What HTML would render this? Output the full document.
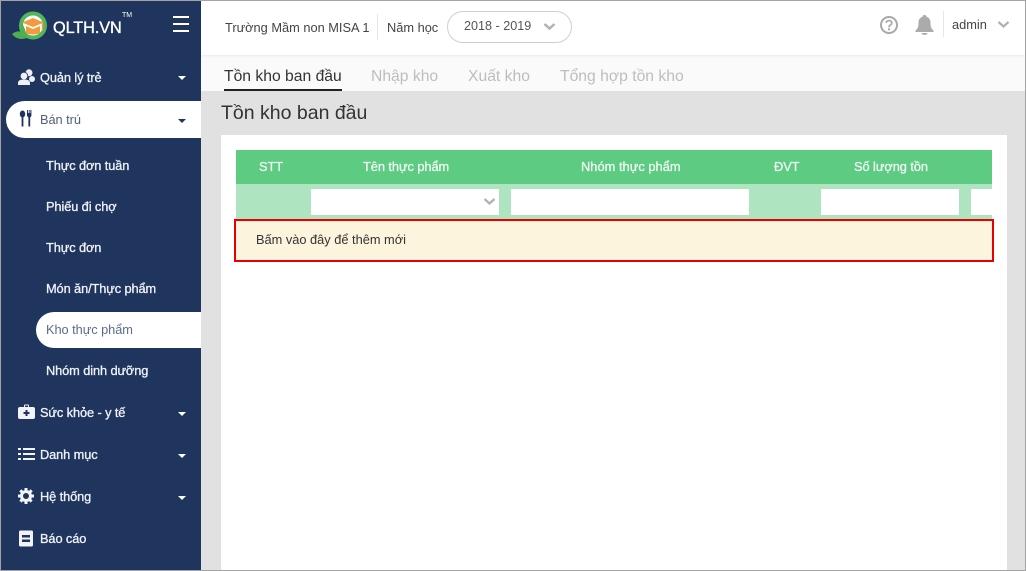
<!DOCTYPE html>
<html><head><meta charset="utf-8">
<style>
html,body{margin:0;padding:0}
body{width:1026px;height:571px;position:relative;overflow:hidden;background:#e1e1e1;font-family:"Liberation Sans","Noto Sans CJK SC",sans-serif}
.a{position:absolute}
.t{position:absolute;white-space:nowrap;line-height:16px}
.m{font-size:12.8px;color:#f0f2f6;letter-spacing:-.1px;-webkit-text-stroke:.3px #f0f2f6}
.s{left:46px}
.i{left:40px}
.c{position:absolute;left:178px;width:0;height:0;border-left:4px solid transparent;border-right:4px solid transparent;border-top:4px solid #fff}
.h{font-size:12.8px;color:#eefaf2;letter-spacing:-.05px;-webkit-text-stroke:.3px #eefaf2;top:159px}
.tab{font-size:15.7px;color:#bdbdbd;top:69px}
</style></head>
<body>
<div class="a" style="left:1px;top:1px;width:200px;height:570px;background:#1f355e"></div>
<div class="a" style="left:201px;top:55px;width:825px;height:36px;background:#fafafa"></div>
<div class="a" style="left:201px;top:1px;width:825px;height:54px;background:#fff;box-shadow:0 1px 3px rgba(0,0,0,.07)"></div>

<svg class="a" style="left:11px;top:11px" width="38" height="30" viewBox="0 0 38 30">
<circle cx="22" cy="14.500" r="12" fill="#fff" stroke="#4fb85c" stroke-width="4"/>
<path d="M1 23 C5 20 8 20 11 21 L9 10 C13 14 15 20 16 27 C10 29 5 28 1 23Z" fill="#4fae50"/>
<path d="M22 7 L33 11.500 L22 16 L11 11.500Z" fill="#f39a3e"/>
<path d="M15 15 L22 18 L29 15 V22 C26 24 18 24 15 22Z" fill="#f39a3e"/>
<path d="M31.500 12 V20" stroke="#f39a3e" stroke-width="1.500"/>
</svg>
<div class="t" style="left:53px;top:19px;font-size:16.300px;color:#fff;line-height:18px;letter-spacing:-.1px;-webkit-text-stroke:.35px #fff">QLTH.VN</div>
<div class="t" style="left:122px;top:12px;font-size:7px;color:#fff;line-height:8px">TM</div>
<div class="a" style="left:173px;top:16px;width:16px;height:2px;background:#fff"></div>
<div class="a" style="left:173px;top:23px;width:16px;height:2px;background:#fff"></div>
<div class="a" style="left:173px;top:30px;width:16px;height:2px;background:#fff"></div>

<svg class="a" style="left:18px;top:69px" width="17" height="16" viewBox="0 0 17 16" fill="#eef0f4">
<circle cx="11" cy="3.800" r="3.500"/><circle cx="14" cy="10" r="3"/>
<circle cx="6" cy="7" r="3.800" stroke="#1f355e" stroke-width=".8"/>
<path d="M0 16 V14 C0 11 3 10.500 6 10.500 C9 10.500 12 11 12 14 V16Z"/></svg>
<div class="t m i" style="top:70px">Quản lý trẻ</div><div class="c" style="top:76px"></div>

<div class="a" style="left:6px;top:101px;width:195px;height:37px;background:#fff;border-radius:19px 0 0 19px"></div>
<svg class="a" style="left:19px;top:110px" width="14" height="17" viewBox="0 0 14 17" fill="#1f355e">
<ellipse cx="3.500" cy="4" rx="2.700" ry="3.500"/><rect x="2.600" y="6" width="1.800" height="10.500"/>
<path d="M8 0 H9 V3 H9.800 V0 H10.600 V3 H11.400 V0 H12.400 V6 L11.200 7.500 V16.500 H9.400 V7.500 L8 6Z"/></svg>
<div class="t" style="left:40px;top:112px;font-size:12.800px;color:#4e5f80;letter-spacing:-.05px">Bán trú</div>
<div class="c" style="top:119px;border-top-color:#1f355e"></div>

<div class="t m s" style="top:158px">Thực đơn tuần</div>
<div class="t m s" style="top:199px">Phiếu đi chợ</div>
<div class="t m s" style="top:240px">Thực đơn</div>
<div class="t m s" style="top:281px">Món ăn/Thực phẩm</div>
<div class="a" style="left:36px;top:312px;width:165px;height:36px;background:#fff;border-radius:18px 0 0 18px"></div>
<div class="t s" style="top:322px;font-size:12.800px;color:#5d6c8a;letter-spacing:-.05px">Kho thực phẩm</div>
<div class="t m s" style="top:363px">Nhóm dinh dưỡng</div>

<svg class="a" style="left:18px;top:404px" width="17" height="16" viewBox="0 0 17 16">
<path d="M6 3 V1.500 Q6 .5 7 .5 H10 Q11 .5 11 1.500 V3 H15 Q17 3 17 5 V13 Q17 15 15 15 H2 Q0 15 0 13 V5 Q0 3 2 3Z M7 3 H10 V1.500 H7Z" fill="#f2f4f7" fill-rule="evenodd"/>
<path d="M8.500 6 V12 M5.500 9 H11.500" stroke="#1f355e" stroke-width="2"/></svg>
<div class="t m i" style="top:405px">Sức khỏe - y tế</div><div class="c" style="top:412px"></div>

<svg class="a" style="left:18px;top:447px" width="17" height="14" viewBox="0 0 17 14" fill="#f2f4f7">
<rect x="0" y="1" width="3" height="2"/><rect x="5" y="1" width="12" height="2"/>
<rect x="0" y="6" width="3" height="2"/><rect x="5" y="6" width="12" height="2"/>
<rect x="0" y="11" width="3" height="2"/><rect x="5" y="11" width="12" height="2"/></svg>
<div class="t m i" style="top:447px">Danh mục</div><div class="c" style="top:454px"></div>

<svg class="a" style="left:18px;top:488px" width="16" height="16" viewBox="0 0 16 16">
<circle cx="8" cy="8" r="4.500" fill="none" stroke="#f2f4f7" stroke-width="3"/>
<path d="M8 0 V16 M0 8 H16 M2.300 2.300 L13.700 13.700 M13.700 2.300 L2.300 13.700" stroke="#f2f4f7" stroke-width="3" stroke-dasharray="3 10 3"/></svg>
<div class="t m i" style="top:489px">Hệ thống</div><div class="c" style="top:496px"></div>

<svg class="a" style="left:19px;top:530px" width="14" height="17" viewBox="0 0 14 17">
<rect width="14" height="16" x="0" y=".5" rx="1.500" fill="#f2f4f7"/>
<path d="M3 5 H11 V7.500 H3Z M3 9.500 H11 V12 H3Z" fill="#1f355e"/></svg>
<div class="t m i" style="top:531px">Báo cáo</div>

<div class="t" style="left:225px;top:20px;font-size:12.800px;color:#444">Trường Mầm non MISA 1</div>
<div class="a" style="left:377px;top:14px;width:1px;height:26px;background:#e6e6e6"></div>
<div class="t" style="left:387px;top:20px;font-size:12.800px;color:#444">Năm học</div>
<div class="a" style="left:447px;top:11px;width:123px;height:30px;border:1px solid #cfcfcf;border-radius:16px;background:#fff"></div>
<div class="t" style="left:464px;top:18px;font-size:12.600px;color:#555">2018 - 2019</div>
<svg class="a" style="left:543px;top:22px" width="13" height="9" viewBox="0 0 13 9"><path d="M1.500 2 L6.500 6.500 L11.500 2" fill="none" stroke="#b0b0b0" stroke-width="2.400"/></svg>

<svg class="a" style="left:879px;top:15px" width="20" height="20" viewBox="0 0 20 20">
<circle cx="10" cy="10" r="8" fill="none" stroke="#a9a9a9" stroke-width="2"/>
<path d="M7.200 8 C7.200 4.800 12.800 4.800 12.800 8 C12.800 10 10 10 10 12.200" fill="none" stroke="#a9a9a9" stroke-width="1.700"/>
<rect x="9" y="13.300" width="2" height="2" fill="#a9a9a9"/></svg>
<svg class="a" style="left:915px;top:15px" width="19" height="20" viewBox="0 0 19 20" fill="#ababab">
<path d="M9.500 0 C11 0 11.500 1 11.500 1.800 C14.500 2.800 15.500 5 15.500 8 C15.500 12 16.500 14 18.500 15.500 V17 H.5 V15.500 C2.500 14 3.500 12 3.500 8 C3.500 5 4.500 2.800 7.500 1.800 C7.500 1 8 0 9.500 0Z"/>
<path d="M6.500 18 H12.500 C12.500 20.500 6.500 20.500 6.500 18Z"/></svg>
<div class="a" style="left:943px;top:11px;width:1px;height:26px;background:#e6e6e6"></div>
<div class="t" style="left:952px;top:17px;font-size:12.800px;color:#444">admin</div>
<svg class="a" style="left:997px;top:20px" width="13" height="9" viewBox="0 0 13 9"><path d="M1.500 2 L6.500 6.500 L11.500 2" fill="none" stroke="#b0b0b0" stroke-width="2.200"/></svg>

<div class="t tab" style="left:224px;color:#333">Tồn kho ban đầu</div>
<div class="a" style="left:224px;top:89px;width:118px;height:2px;background:#222"></div>
<div class="t tab" style="left:371px">Nhập kho</div>
<div class="t tab" style="left:468px">Xuất kho</div>
<div class="t tab" style="left:560px">Tổng hợp tồn kho</div>

<div class="t" style="left:221px;top:101px;font-size:19.500px;line-height:24px;color:#333">Tồn kho ban đầu</div>

<div class="a" style="left:221px;top:135px;width:786px;height:436px;background:#fff"></div>
<div class="a" style="left:236px;top:150px;width:756px;height:34px;background:#5ecb83"></div>
<div class="a" style="left:236px;top:184px;width:756px;height:35px;background:#aee4bf"></div>
<div class="t h" style="left:259px">STT</div>
<div class="t h" style="left:363px">Tên thực phẩm</div>
<div class="t h" style="left:581px;letter-spacing:.05px">Nhóm thực phẩm</div>
<div class="t h" style="left:774px">ĐVT</div>
<div class="t h" style="left:854px">Số lượng tồn</div>
<div class="a" style="left:311px;top:189px;width:188px;height:26px;background:#fff"></div>
<svg class="a" style="left:483px;top:197px" width="13" height="9" viewBox="0 0 13 9"><path d="M1.500 2 L6.500 6.500 L11.500 2" fill="none" stroke="#b0b0b0" stroke-width="2.200"/></svg>
<div class="a" style="left:511px;top:189px;width:238px;height:26px;background:#fff"></div>
<div class="a" style="left:821px;top:189px;width:138px;height:26px;background:#fff"></div>
<div class="a" style="left:971px;top:189px;width:21px;height:26px;background:#fff"></div>
<div class="a" style="left:234px;top:219px;width:756px;height:39px;background:#fdf4de;border:2px solid #e60000"></div>
<div class="t" style="left:256px;top:232px;font-size:12.800px;color:#333">Bấm vào đây để thêm mới</div>

<div class="a" style="left:0;top:0;width:1026px;height:1px;background:#a3a3a3"></div>
<div class="a" style="left:0;top:0;width:1px;height:571px;background:#a3a3a3"></div>
<div class="a" style="left:1025px;top:0;width:1px;height:571px;background:#a3a3a3"></div>
<div class="a" style="left:0;top:570px;width:1026px;height:1px;background:#a3a3a3"></div>
</body></html>
